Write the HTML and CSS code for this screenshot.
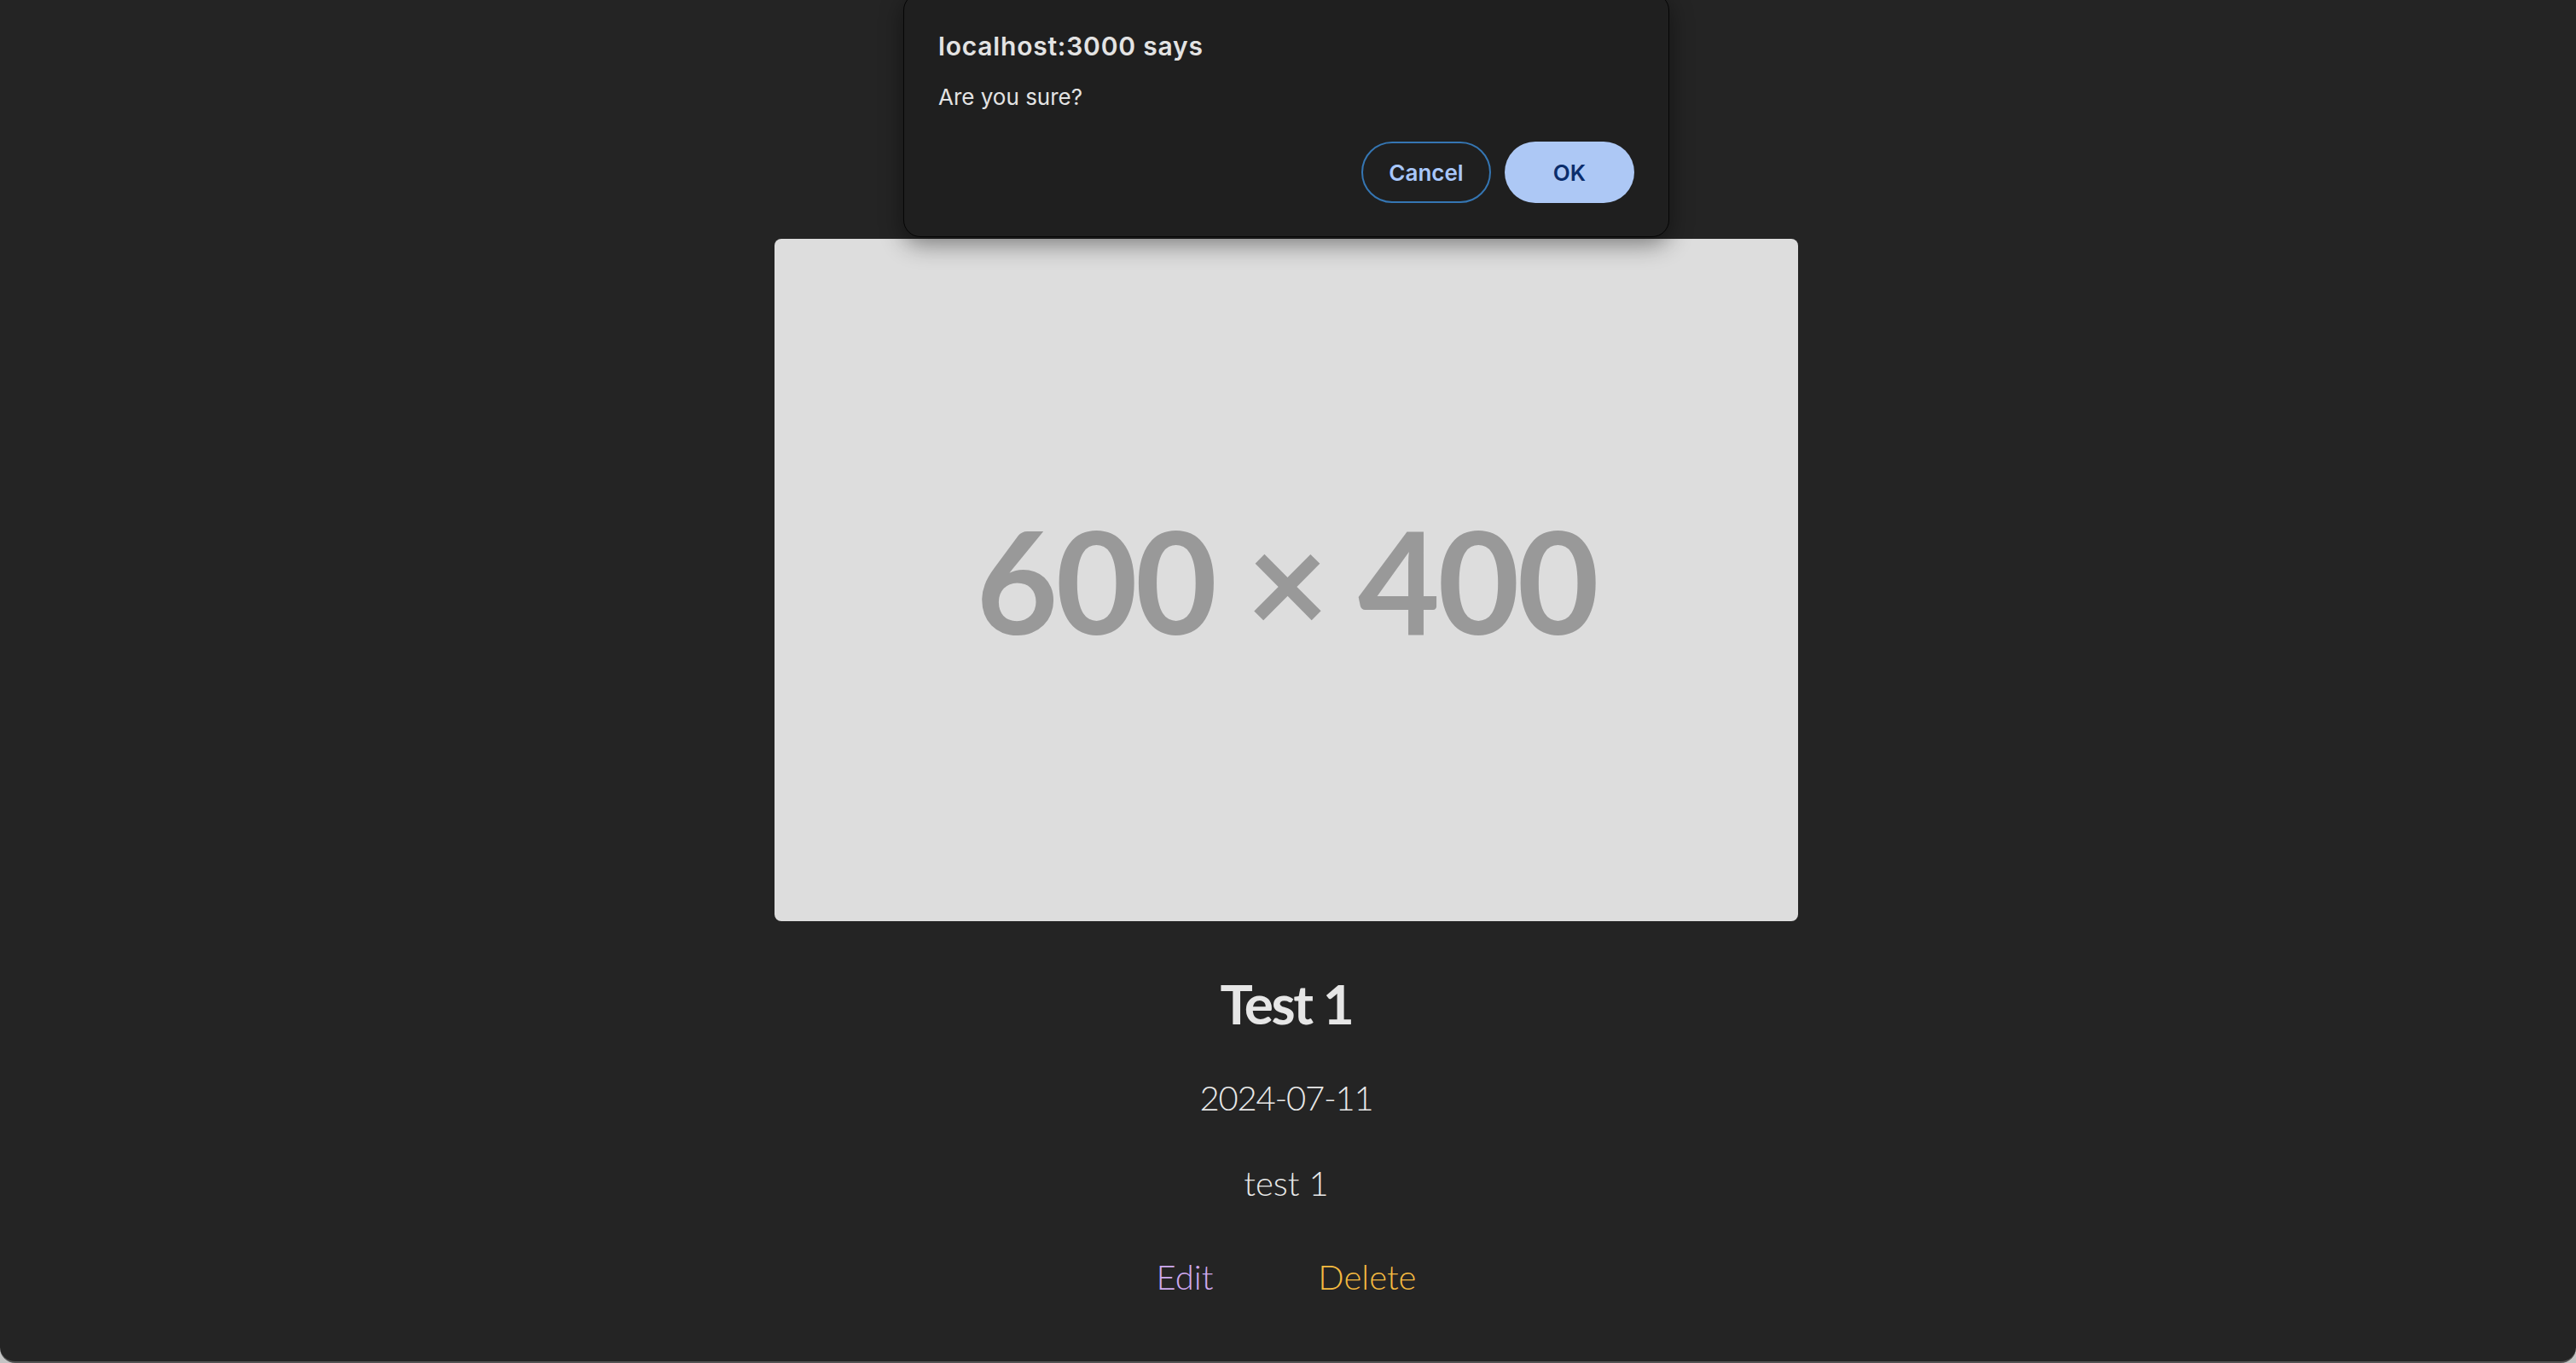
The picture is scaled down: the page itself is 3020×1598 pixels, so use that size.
FILE: index.html
```html
<!DOCTYPE html>
<html lang="en">
<head>
<meta charset="utf-8">
<title>Test 1</title>
<link rel="stylesheet" href="styles.css">
</head>
<body>
<div class="window">
  <main class="post">
    <div class="thumb"><span class="thumb-label">600 × 400</span></div>
    <h1 class="post-title">Test 1</h1>
    <p class="post-date">2024-07-11</p>
    <p class="post-body">test 1</p>
    <div class="post-actions">
      <a class="action action-edit" href="#">Edit</a>
      <a class="action action-delete" href="#">Delete</a>
    </div>
  </main>
  <div class="dialog" role="dialog">
    <div class="dialog-title">localhost:3000 says</div>
    <div class="dialog-message">Are you sure?</div>
    <div class="dialog-buttons">
      <button class="btn btn-cancel">Cancel</button>
      <button class="btn btn-ok">OK</button>
    </div>
  </div>
</div>
</body>
</html>
```
FILE: styles.css
```css
html {
  background: #c4c4c4;
}
body {
  margin: 0;
}
.window {
  position: relative;
  height: 1598px;
  box-sizing: border-box;
  background: #242424;
  border-bottom: 2px solid #525252;
  border-radius: 0 0 18px 18px;
  overflow: hidden;
}
.post {
  display: flex;
  flex-direction: column;
  align-items: center;
  padding: 280px 4px 0 0;
  font-family: "Lato", "Noto Sans", sans-serif;
}
.thumb {
  width: 1200px;
  height: 800px;
  background: #dddddd;
  border-radius: 8px;
  display: flex;
  align-items: center;
  justify-content: center;
}
.thumb-label {
  font-family: "Lato", sans-serif;
  font-weight: 700;
  font-size: 166px;
  line-height: 1;
  letter-spacing: -3px;
  color: #999999;
}
.post-title {
  margin: 65px 0 0;
  font-size: 64px;
  line-height: 64px;
  font-weight: 700;
  letter-spacing: -2.4px;
  color: #e6e6e6;
}
.post-date {
  margin: 58px 0 0;
  font-size: 40px;
  line-height: 40px;
  font-weight: 300;
  letter-spacing: -1.2px;
  color: #e8e8e8;
}
.post-body {
  margin: 60px 0 0;
  font-size: 40px;
  line-height: 40px;
  font-weight: 300;
  color: #e8e8e8;
}
.post-actions {
  margin-top: 70px;
  display: flex;
  gap: 123px;
}
.action {
  font-size: 40px;
  line-height: 40px;
  font-weight: 300;
  text-decoration: none;
}
.action-edit {
  color: #cfaaf0;
}
.action-delete {
  color: #f5bb40;
}
.dialog {
  position: absolute;
  top: -8px;
  left: 1059px;
  width: 898px;
  box-sizing: border-box;
  padding: 43px 40px 39px 40px;
  background: #1f1f1f;
  border: 1px solid #050505;
  border-radius: 20px;
  box-shadow: 0 8px 28px rgba(0, 0, 0, 0.45);
  font-family: "Inter", "Roboto", sans-serif;
}
.dialog-title {
  font-size: 30px;
  line-height: 36px;
  font-weight: 600;
  letter-spacing: 0.8px;
  color: #e3e3e3;
}
.dialog-message {
  margin-top: 26px;
  font-size: 26px;
  line-height: 32px;
  color: #e3e3e3;
}
.dialog-buttons {
  margin-top: 36px;
  display: flex;
  justify-content: flex-end;
  gap: 16px;
}
.btn {
  width: 152px;
  height: 72px;
  box-sizing: border-box;
  border-radius: 36px;
  font-family: "Inter", "Roboto", sans-serif;
  font-size: 26px;
  font-weight: 600;
  cursor: pointer;
}
.btn-cancel {
  background: transparent;
  border: 2px solid #3576b3;
  color: #a8c7fa;
}
.btn-ok {
  background: #adc8f5;
  border: none;
  color: #0b2d6b;
}
```
